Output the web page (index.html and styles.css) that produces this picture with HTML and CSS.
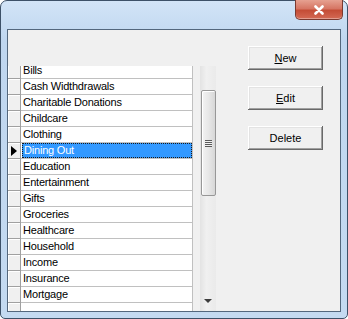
FILE: index.html
```html
<!DOCTYPE html>
<html lang="en">
<head>
    <meta charset="UTF-8">
    <title>Categories</title>
    <link rel="stylesheet" href="styles.css">
</head>
<body>

    <div class="window">
        <!-- Title bar -->
        <div class="titlebar">
            <div class="close-btn">
                <svg width="12" height="10" viewBox="0 0 12 10">
                    <path d="M2.5 1.5 L9.5 8.5 M9.5 1.5 L2.5 8.5" stroke="#fff" stroke-width="2.6" stroke-linecap="round"/>
                </svg>
            </div>
        </div>

        <!-- Client area -->
        <div class="client">
            <div class="grid">
                <div class="rows">
                    <div class="row"><div class="ind"></div><div class="cell">Bills</div></div>
                    <div class="row"><div class="ind"></div><div class="cell">Cash Widthdrawals</div></div>
                    <div class="row"><div class="ind"></div><div class="cell">Charitable Donations</div></div>
                    <div class="row"><div class="ind"></div><div class="cell">Childcare</div></div>
                    <div class="row"><div class="ind"></div><div class="cell">Clothing</div></div>
                    <div class="row current"><div class="ind"><span class="arrow"></span></div><div class="cell"><span class="sel">Dining Out</span></div></div>
                    <div class="row"><div class="ind"></div><div class="cell">Education</div></div>
                    <div class="row"><div class="ind"></div><div class="cell">Entertainment</div></div>
                    <div class="row"><div class="ind"></div><div class="cell">Gifts</div></div>
                    <div class="row"><div class="ind"></div><div class="cell">Groceries</div></div>
                    <div class="row"><div class="ind"></div><div class="cell">Healthcare</div></div>
                    <div class="row"><div class="ind"></div><div class="cell">Household</div></div>
                    <div class="row"><div class="ind"></div><div class="cell">Income</div></div>
                    <div class="row"><div class="ind"></div><div class="cell">Insurance</div></div>
                    <div class="row"><div class="ind"></div><div class="cell">Mortgage</div></div>
                    <div class="row"><div class="ind"></div><div class="cell"></div></div>
                </div>
                <div class="gap"></div>
                <div class="scrollbar">
                    <div class="thumb"><span class="grip"></span></div>
                    <div class="down"><span class="down-arrow"></span></div>
                </div>
            </div>

            <div class="buttons">
                <button class="btn"><u>N</u>ew</button>
                <button class="btn"><u>E</u>dit</button>
                <button class="btn">Delete</button>
            </div>
        </div>
    </div>

</body>
</html>
```

FILE: styles.css
```css
/* General */
* {
    margin: 0;
    padding: 0;
    box-sizing: border-box;
}

body {
    font-family: "Liberation Sans", Arial, sans-serif;
    font-size: 11px;
    color: #000;
    background-color: #fff;
}

/* Window frame */
.window {
    position: relative;
    width: 348px;
    height: 319px;
    border: 1px solid #3d5168;
    border-radius: 7px 7px 5px 5px;
    background: linear-gradient(#d2e4f7, #bfd6ef 40px, #c4daf1);
    padding: 0 6px 6px 6px;
    display: flex;
    flex-direction: column;
}

.titlebar {
    height: 28px;
    flex: none;
}

.close-btn {
    position: absolute;
    top: -1px;
    right: 4px;
    width: 48px;
    height: 20px;
    border: 1px solid #7a3a30;
    border-top: none;
    border-radius: 0 0 5px 5px;
    background: linear-gradient(#e6a191, #d67664 45%, #c44d36 55%, #d46a54);
    box-shadow: inset 0 -1px 0 rgba(255, 255, 255, 0.35);
    display: flex;
    justify-content: center;
    align-items: center;
}

/* Client area */
.client {
    flex: 1;
    border: 1px solid #53677d;
    background-color: #f0f0f0;
    display: flex;
    overflow: hidden;
}

/* Grid */
.grid {
    width: 208px;
    margin-top: 36px;
    display: flex;
    overflow: hidden;
}

.rows {
    width: 185px;
    margin-top: -3px;
    flex: none;
}

.row {
    display: flex;
    height: 16px;
}

.ind {
    width: 13px;
    border-right: 1px solid #a0a0a0;
    border-bottom: 1px solid #a0a0a0;
    background-color: #f0f0f0;
    box-shadow: inset 1px 1px 0 #fff;
    display: flex;
    align-items: center;
    padding-left: 3px;
}

.cell {
    flex: 1;
    background-color: #fff;
    border-right: 1px solid #c0c0c0;
    border-bottom: 1px solid #c0c0c0;
    padding-left: 2px;
    line-height: 15px;
    letter-spacing: -0.2px;
    white-space: nowrap;
    overflow: hidden;
}

.sel {
    display: block;
    margin-left: -1px;
    padding-left: 1px;
    height: 15px;
    line-height: 13px;
    background-color: #3399ff;
    color: #fff;
    border: 1px dotted #1a1a1a;
}

.arrow {
    width: 0;
    height: 0;
    border-top: 5px solid transparent;
    border-bottom: 5px solid transparent;
    border-left: 6px solid #000;
}

.gap {
    width: 7px;
    flex: none;
}

/* Scrollbar */
.scrollbar {
    width: 16px;
    flex: none;
    background: linear-gradient(90deg, #e3e3e3, #f0f0f0 40%, #eaeaea);
    display: flex;
    flex-direction: column;
}

.thumb {
    margin-top: 24px;
    margin-left: 1px;
    width: 15px;
    height: 106px;
    border: 1px solid #979797;
    border-radius: 2px;
    background: linear-gradient(90deg, #f3f3f3, #e7e7e7 50%, #d7d7d7);
    box-shadow: inset 1px 1px 0 #fff;
    display: flex;
    justify-content: center;
    align-items: center;
}

.grip {
    width: 7px;
    height: 7px;
    background: repeating-linear-gradient(#5a5a5a 0 1px, #f0f0f0 1px 2px);
}

.down {
    margin-top: auto;
    height: 17px;
    display: flex;
    justify-content: center;
    padding-top: 5px;
}

.down-arrow {
    width: 0;
    height: 0;
    border-left: 4px solid transparent;
    border-right: 4px solid transparent;
    border-top: 4px solid #3c3c3c;
}

/* Buttons */
.buttons {
    margin-left: 32px;
    margin-top: 16px;
    display: flex;
    flex-direction: column;
    gap: 16px;
}

.btn {
    width: 75px;
    height: 24px;
    font-family: "Liberation Sans", Arial, sans-serif;
    font-size: 11px;
    color: #000;
    background-color: #f0f0f0;
    border: none;
    box-shadow: inset -1px -1px 0 #696969, inset 1px 1px 0 #fff, inset -2px -2px 0 #a0a0a0, inset 2px 2px 0 #e3e3e3;
}
```
